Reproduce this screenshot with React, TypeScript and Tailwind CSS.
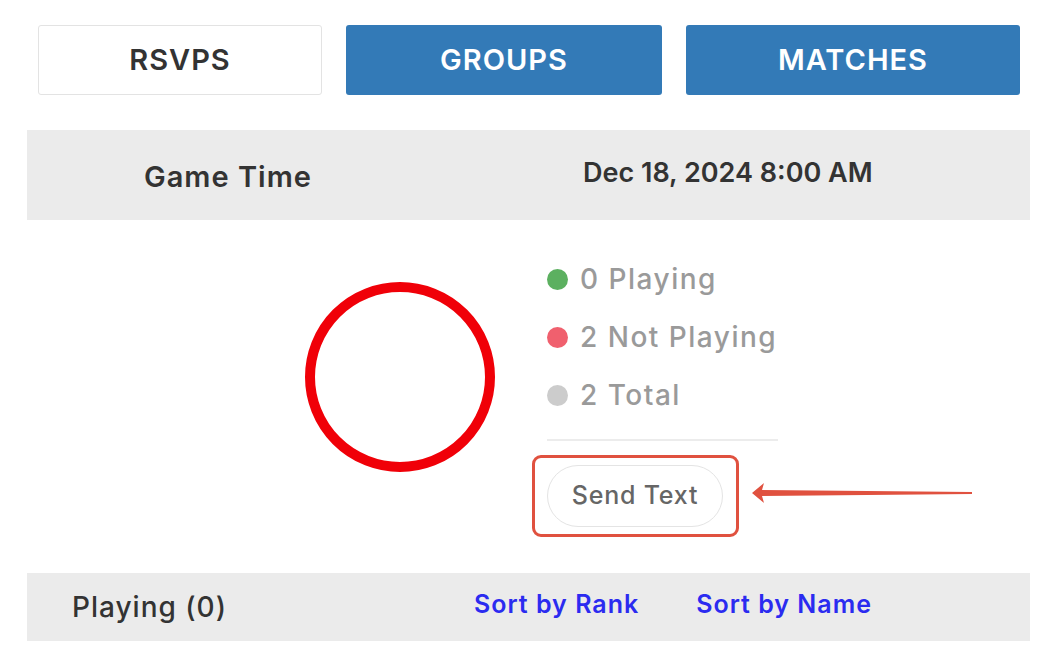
import React from "react";

export default function App() {
  const font = { fontFamily: "Inter, 'Liberation Sans', sans-serif" };
  return (
    <div className="w-[1048px] h-[655px] bg-white overflow-hidden relative" style={font}>
      <div className="flex pt-[25px] pl-[38px] gap-[24px]">
        <div className="w-[284px] h-[70px] border border-[#e3e3e3] rounded-[3px] flex items-center justify-center text-[29px] tracking-[1px] font-semibold text-[#333]">
          RSVPS
        </div>
        <div className="w-[316px] h-[70px] bg-[#337ab7] rounded-[3px] flex items-center justify-center text-[29px] tracking-[1px] font-semibold text-white">
          GROUPS
        </div>
        <div className="w-[334px] h-[70px] bg-[#337ab7] rounded-[3px] flex items-center justify-center text-[29px] tracking-[1px] font-semibold text-white">
          MATCHES
        </div>
      </div>

      <div className="mt-[35px] mx-[27px] w-[1003px] h-[90px] bg-[#ebebeb] flex items-center">
        <div className="pl-[117px] w-[556px] text-[29px] tracking-[1px] font-semibold text-[#333] pt-[3px]">Game Time</div>
        <div className="text-[27px] font-semibold text-[#333] -mt-[4px]">Dec 18, 2024 8:00 AM</div>
      </div>

      <div className="flex h-[353px]">
        <div className="pl-[305px] pt-[62px]">
          <div className="w-[190px] h-[190px] rounded-full border-[10px] border-[#f00008]" />
        </div>
        <div className="pl-[52px] pt-[30px] flex flex-col">
          <div className="flex flex-col w-[231px]">
            {[
              { c: "bg-[#5cb060]", t: "0 Playing" },
              { c: "bg-[#f0606e]", t: "2 Not Playing" },
              { c: "bg-[#cccccc]", t: "2 Total" },
            ].map((r) => (
              <div key={r.t} className="flex items-center h-[58px]">
                <div className={`w-[21px] h-[21px] rounded-full ${r.c}`} />
                <span className="ml-[12px] text-[28px] tracking-[1.5px] text-[#9a9a9a] font-medium whitespace-nowrap">{r.t}</span>
              </div>
            ))}
            <div className="mt-[15px] h-[2px] bg-[#ececec]" />
          </div>
          <div className="mt-[14px] -ml-[15px] w-[207px] h-[82px] border-[3px] border-[#e0513f] rounded-[9px] flex items-center pl-[12px]">
            <div className="w-[176px] h-[62px] rounded-full border border-[#e4e4e4] flex items-center justify-center text-[25px] tracking-[0.8px] font-medium text-[#666]">
              Send Text
            </div>
          </div>
        </div>
      </div>

      <div className="mx-[27px] w-[1003px] h-[68px] bg-[#ebebeb] flex items-center">
        <div className="pl-[45px] w-[447px] text-[28px] tracking-[1px] font-medium text-[#333]">Playing (0)</div>
        <div className="text-[25px] tracking-[1px] font-semibold text-[#2b2bf0] -mt-[4px]">Sort by Rank</div>
        <div className="ml-[57px] text-[25px] tracking-[1px] font-semibold text-[#2b2bf0] -mt-[4px]">Sort by Name</div>
      </div>

      <svg className="absolute left-[750px] top-[481px]" width="225" height="24" viewBox="0 0 225 24">
        <path d="M2 12 L14 2 L12 9 L222 11 L222 13 L12 15 L14 22 Z" fill="#e0513f" />
      </svg>
    </div>
  );
}
